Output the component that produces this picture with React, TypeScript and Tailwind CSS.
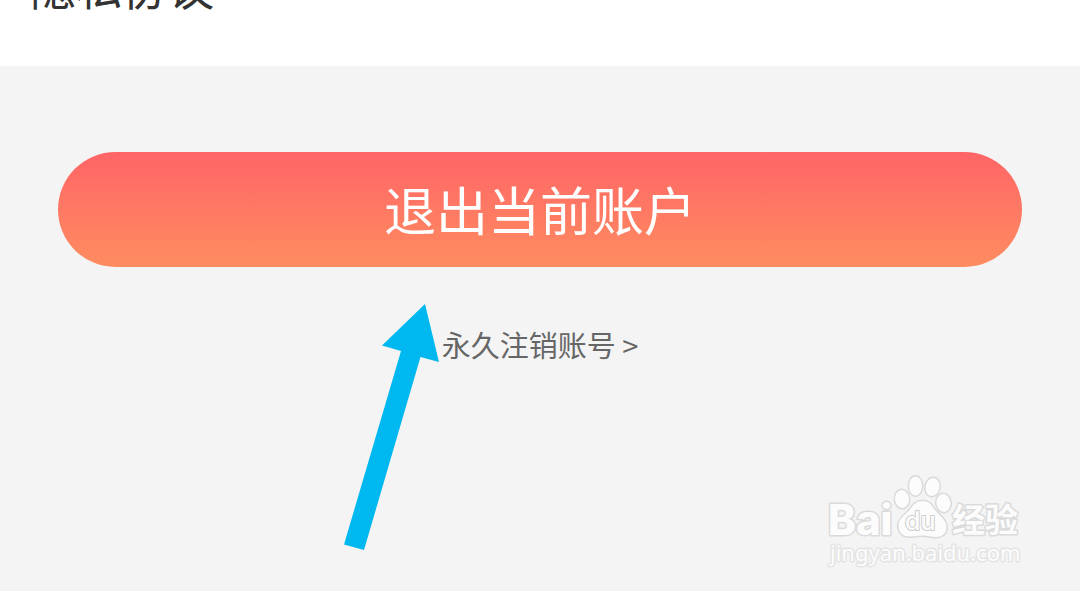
function Watermark() {
  return (
    <svg
      className="pointer-events-none absolute right-[50px] bottom-[16px] h-[105px] w-[210px]"
      viewBox="820 470 210 105"
      role="img"
      aria-label="Baidu 经验"
    >
      <g fill="#fcfcfc" stroke="#dadada" strokeWidth="3" strokeLinejoin="round" className="[paint-order:stroke]">
        <text x="828" y="535" fontSize="42" fontWeight="800" fontFamily="Inter, sans-serif">
          Bai
        </text>
        <ellipse cx="902" cy="499" rx="7" ry="9" transform="rotate(-6 902 499)" />
        <ellipse cx="915.5" cy="486" rx="6.5" ry="9.5" />
        <ellipse cx="932.5" cy="487" rx="7" ry="9" transform="rotate(12 932.5 487)" />
        <ellipse cx="943.5" cy="503" rx="7" ry="9" transform="rotate(-6 943.5 503)" />
        <path d="M922.500 501C929 501 931.500 504.500 934.500 509.500C938 514.500 946.500 519 946.500 527.500C946.500 534 941.500 537 936 537C931 537 927.500 535.500 922.500 535.500C917.500 535.500 914 536.500 909 536.500C902.500 536.500 898.500 532 898.500 525.500C898.500 518 906.500 514 910 509.500C913.500 504.500 916 501 922.500 501Z" />
        <text x="905" y="530" fontSize="25" fontWeight="500" fontFamily="Inter, sans-serif" stroke="#cccccc" strokeWidth="2">
          du
        </text>
        <text x="952" y="532" fontSize="33" fontWeight="700" fontFamily="'Noto Sans CJK SC', sans-serif">
          经验
        </text>
        <text x="830" y="561" fontSize="22" fontWeight="400" fontFamily="'Noto Sans', sans-serif" stroke="#e4e4e4">
          jingyan.baidu.com
        </text>
      </g>
    </svg>
  );
}

function Pointer() {
  return (
    <svg
      className="pointer-events-none absolute top-[35px] -left-[100px] h-[250px] w-[100px]"
      viewBox="342 302 100 250"
      aria-hidden="true"
    >
      <path d="M425 304L439 362L420.500 357L364 550L344 544.500L401 351L382 345.500Z" fill="#00b8f0" />
    </svg>
  );
}

export default function App() {
  return (
    <div className="relative flex min-h-screen flex-col bg-[#f4f4f4] font-['Noto_Sans_CJK_SC',sans-serif]">
      <header className="flex h-[66px] flex-col justify-end overflow-hidden bg-white px-[30px] pb-[57px]">
        <a href="#privacy" className="block text-[46px] leading-[48px] text-[#333333]">
          隐私协议
        </a>
      </header>
      <main className="flex flex-1 flex-col items-center px-[58px] pt-[86px]">
        <button
          type="button"
          className="h-[115px] w-full rounded-full bg-linear-to-b from-[#ff6466] to-[#fe8c60] pb-[2px] text-[52px] leading-[64px] text-white"
        >
          退出当前账户
        </button>
        <div className="relative">
          <a href="#delete" className="mt-[57px] block text-[29px] leading-[40px] text-[#666666]">
            永久注销账号 &gt;
          </a>
          <Pointer />
        </div>
      </main>
      <Watermark />
    </div>
  );
}
